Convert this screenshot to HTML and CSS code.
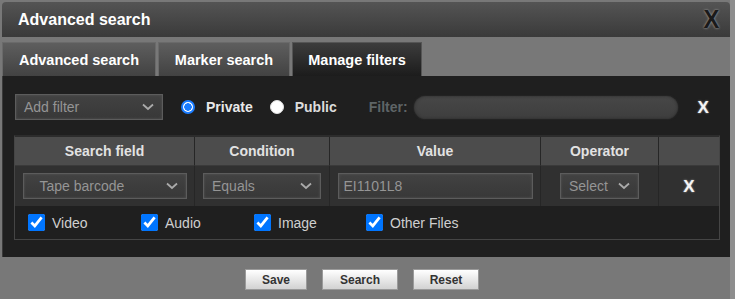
FILE: index.html
```html
<!DOCTYPE html>
<html>
<head>
<meta charset="utf-8">
<link rel="stylesheet" href="styles.css">
</head>
<body>
<div class="page">
  <div class="window">
    <div class="titlebar">
      <span class="title">Advanced search</span>
      <span class="close">X</span>
    </div>
    <div class="tabs">
      <div class="tab t1">Advanced search</div>
      <div class="tab t2">Marker search</div>
      <div class="tab t3 active">Manage filters</div>
    </div>
    <div class="panel">
      <div class="filterrow">
        <div class="sel addfilter"><span>Add filter</span><svg class="chev" width="12" height="8" viewBox="0 0 12 8"><path d="M1 1.5 L6 6 L11 1.5" fill="none" stroke="#aaa" stroke-width="1.8"/></svg></div>
        <label class="radio"><input type="radio" name="scope" checked><span>Private</span></label>
        <label class="radio pub"><input type="radio" name="scope"><span>Public</span></label>
        <span class="flabel">Filter:</span>
        <div class="pill"></div>
        <span class="xicon">X</span>
      </div>
      <div class="table">
        <div class="hrow">
          <div class="c c1">Search field</div>
          <div class="c c2">Condition</div>
          <div class="c c3">Value</div>
          <div class="c c4">Operator</div>
          <div class="c c5"></div>
        </div>
        <div class="drow">
          <div class="c c1"><div class="sel tape"><span>Tape barcode</span><svg class="chev" width="12" height="8" viewBox="0 0 12 8"><path d="M1 1.5 L6 6 L11 1.5" fill="none" stroke="#aaa" stroke-width="1.8"/></svg></div></div>
          <div class="c c2"><div class="sel cond"><span>Equals</span><svg class="chev" width="12" height="8" viewBox="0 0 12 8"><path d="M1 1.5 L6 6 L11 1.5" fill="none" stroke="#aaa" stroke-width="1.8"/></svg></div></div>
          <div class="c c3"><div class="sel val"><span>EI1101L8</span></div></div>
          <div class="c c4"><div class="sel op"><span>Select</span><svg class="chev" width="12" height="8" viewBox="0 0 12 8"><path d="M1 1.5 L6 6 L11 1.5" fill="none" stroke="#aaa" stroke-width="1.8"/></svg></div></div>
          <div class="c c5"><span class="xicon">X</span></div>
        </div>
        <div class="crow">
          <label class="cb w1"><input type="checkbox" checked><span>Video</span></label>
          <label class="cb w2"><input type="checkbox" checked><span>Audio</span></label>
          <label class="cb w3"><input type="checkbox" checked><span>Image</span></label>
          <label class="cb"><input type="checkbox" checked><span>Other Files</span></label>
        </div>
      </div>
    </div>
    <div class="buttons">
      <button class="btn b-save">Save</button>
      <button class="btn b-search">Search</button>
      <button class="btn b-reset">Reset</button>
    </div>
  </div>
</div>
</body>
</html>
```
FILE: styles.css
```css
* { box-sizing: border-box; }
html, body { margin: 0; padding: 0; }
body {
  width: 735px;
  height: 299px;
  overflow: hidden;
  background: #787878;
  font-family: "Liberation Sans", Arial, sans-serif;
}
.page {
  width: 735px;
  height: 299px;
  border-right: 5px solid #8e8e8e;
  padding: 2px 0 0 2px;
}
.window { width: 728px; }
.titlebar {
  height: 35px;
  border-radius: 4px 4px 0 0;
  background: linear-gradient(#545454, #3a3a3a);
  display: flex;
  align-items: center;
  justify-content: space-between;
  padding: 0 10px 0 16px;
}
.title {
  color: #fff;
  font-weight: bold;
  font-size: 16px;
}
.close {
  color: #1a1a1a;
  font-weight: bold;
  font-size: 25px;
  line-height: 1;
  text-shadow: 0 0 2px #999, 0 0 3px #777;
  transform: scaleX(0.95);
}
.tabs {
  display: flex;
  gap: 2px;
  margin-top: 5px;
  height: 34px;
}
.tab {
  background: linear-gradient(#5e5e5e, #424242);
  border: 1px solid #6a6a6a;
  border-bottom: none;
  color: #fff;
  font-weight: bold;
  font-size: 14.5px;
  display: flex;
  align-items: center;
  justify-content: center;
}
.t1 { width: 154px; }
.t2 { width: 132px; }
.t3 { width: 130px; }
.tab.active { background: linear-gradient(#3c3c3c, #1c1c1c); border-color: #555; }
.panel {
  background: #1f1f1f;
  height: 181px;
  padding: 18px 10px 0 11px;
  border-left: 1px solid #3a3a3a;
}
.filterrow {
  display: flex;
  align-items: center;
  height: 26px;
}
.sel {
  height: 26px;
  background: linear-gradient(#424242, #383838);
  border: 1px solid #5c5c5c;
  box-shadow: inset 0 0 3px #555;
  color: #959595;
  font-size: 14px;
  display: flex;
  align-items: center;
  justify-content: space-between;
  padding: 0 8px 0 8px;
}
.addfilter { width: 148px; margin-left: 1px; }
.radio {
  display: flex;
  align-items: center;
  color: #e8e8e8;
  font-weight: bold;
  font-size: 14px;
  margin-left: 18px;
}
.radio input {
  appearance: none;
  -webkit-appearance: none;
  margin: 0 11px 0 0;
  width: 14px;
  height: 14px;
  border-radius: 50%;
  background: #fff;
  border: 1px solid #e0e0e0;
}
.radio input:checked {
  border: 2px solid #1a7cff;
  background: radial-gradient(circle, #1a7cff 0 3.5px, #fff 4px);
}
.radio.pub { margin-left: 17px; }
.radio.pub span { color: #dcdcdc; }
.flabel {
  color: #5e6466;
  font-weight: bold;
  font-size: 14px;
  margin-left: 32px;
}
.pill {
  width: 264px;
  height: 23px;
  border-radius: 12px;
  background: linear-gradient(#474747, #3e3e3e);
  box-shadow: inset 0 0 3px #2a2a2a, 0 0 2px #333;
  margin-left: 6px;
}
.xicon {
  color: #f4f4f4;
  font-weight: bold;
  font-size: 17px;
  line-height: 1;
  text-shadow: 0 0 2px #aaa;
}
.filterrow .xicon { margin-left: 20px; }
.table {
  margin-top: 15px;
  width: 706px;
  border: 1px solid #454545;
  border-top: 2px solid #2c2c2c;
}
.hrow, .drow {
  display: flex;
}
.hrow { height: 29px; background: #4c4c4c; }
.drow { height: 40px; background: #303030; }
.c {
  display: flex;
  align-items: center;
  justify-content: center;
  border-right: 1px solid #262626;
}
.hrow .c {
  color: #e2e2e2;
  font-weight: bold;
  font-size: 14px;
  border-bottom: 1px solid #3a3a3a;
}
.c1 { width: 180px; }
.c2 { width: 135px; }
.c3 { width: 211px; }
.c4 { width: 118px; }
.c5 { width: 60px; border-right: none; }
.tape { width: 164px; padding-left: 16px; }
.cond { width: 118px; }
.val { width: 195px; justify-content: flex-start; padding-left: 5px; }
.op { width: 79px; padding-left: 8px; }
.op .chev { margin-left: 6px; }
.crow {
  height: 33px;
  display: flex;
  align-items: center;
  padding-left: 13px;
}
.cb {
  display: flex;
  align-items: center;
  color: #cfcfcf;
  font-size: 14px;
}
.cb input {
  width: 17px;
  height: 17px;
  margin: 0 7px 0 0;
  accent-color: #0075ff;
}
.w1 { width: 113px; }
.w2 { width: 113px; }
.w3 { width: 112px; }
.buttons {
  display: flex;
  justify-content: center;
  gap: 15px;
  margin-top: 12px;
  padding-right: 8px;
}
.btn {
  height: 21px;
  background: linear-gradient(#ffffff, #d2d2d2);
  border: 1px solid #9a9a9a;
  color: #333;
  font-family: "Liberation Sans", Arial, sans-serif;
  font-weight: bold;
  font-size: 12px;
  padding: 0;
}
.b-save { width: 62px; }
.b-search { width: 76px; }
.b-reset { width: 66px; }
```
